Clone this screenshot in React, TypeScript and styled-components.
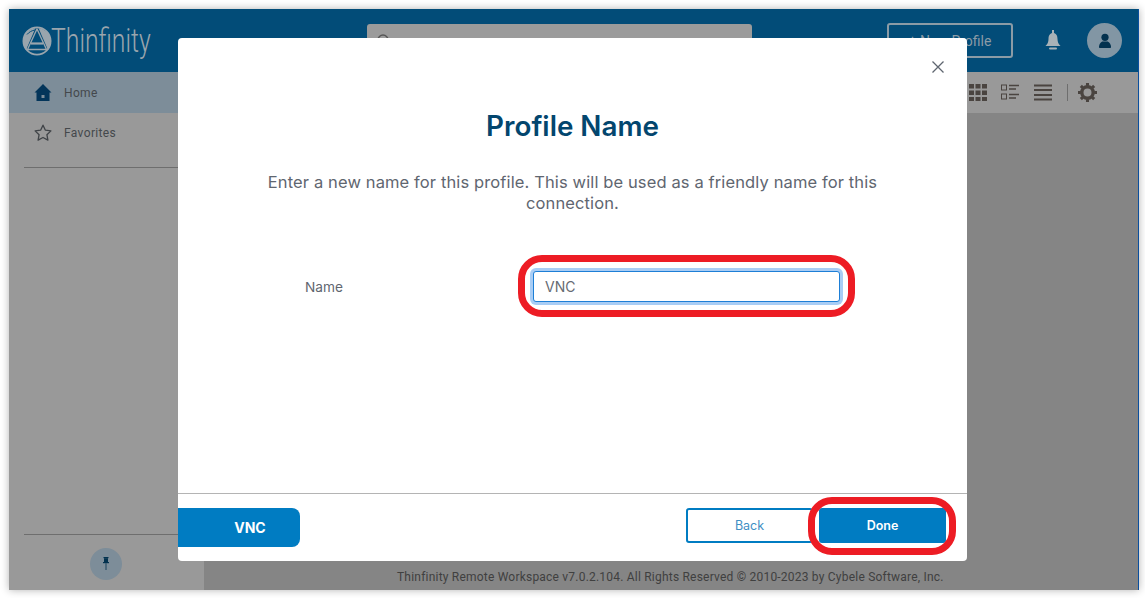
import React from "react";
import styled, { createGlobalStyle } from "styled-components";

const Global = createGlobalStyle`
  html, body { margin: 0; padding: 0; background: #fff; width: 1145px; height: 598px; overflow: hidden; }
  * { box-sizing: border-box; }
  body { font-family: Roboto, "Liberation Sans", sans-serif; }
`;

const Stage = styled.div`
  width: 1145px;
  height: 598px;
  padding: 9px 6px 8px 9px;
  background: #fff;
`;

const Window = styled.div`
  position: relative;
  width: 1130px;
  height: 581px;
  display: flex;
  flex-direction: column;
  overflow: hidden;
  background: #858585;
  border-right: 1px solid #0a4f9e;
  box-shadow: 0 0 8px rgba(0,0,0,.3);
`;

const Header = styled.header`
  height: 63px;
  flex: none;
  background: #024c78;
  display: flex;
  align-items: center;
  padding: 0 16px 0 13px;
`;

const Brand = styled.div`
  display: flex;
  align-items: center;
  width: 345px;
  color: #9aa5ad;
`;

const BrandName = styled.span`
  font-family: Roboto, sans-serif;
  font-size: 33px;
  line-height: 36px;
  font-weight: 300;
  display: inline-block;
  margin-left: -1px;
  transform: scaleX(.75);
  transform-origin: left center;
`;

const Search = styled.div`
  width: 385px;
  height: 33px;
  background: #9b9b9b;
  border-radius: 3px;
  display: flex;
  align-items: center;
  padding-left: 9px;
`;

const HeaderRight = styled.div`
  margin-left: auto;
  display: flex;
  align-items: center;
`;

const NewProfile = styled.div`
  width: 126px;
  height: 35px;
  border: 2px solid #8b9ba6;
  border-radius: 3px;
  color: #8b9ba6;
  font-size: 14px;
  display: flex;
  align-items: center;
  justify-content: center;
  margin-right: 32px;
`;

const Avatar = styled.div`
  width: 35px;
  height: 35px;
  margin-left: 26px;
  border-radius: 50%;
  background: #8296a4;
  display: flex;
  align-items: center;
  justify-content: center;
`;

const Body = styled.div`
  flex: 1;
  display: flex;
  min-height: 0;
`;

const Sidebar = styled.aside`
  width: 195px;
  flex: none;
  background: #999;
  display: flex;
  flex-direction: column;
`;

const NavItem = styled.div<{ $active?: boolean }>`
  height: 41px;
  display: flex;
  align-items: center;
  gap: 12px;
  padding-left: 25px;
  font-size: 12px;
  letter-spacing: .36px;
  color: #44484c;
  background: ${(p) => (p.$active ? "#7d8d99" : "transparent")};
  & + & { height: 39px; }
`;

const Divider = styled.div`
  height: 1px;
  margin: 15px 0 0 15px;
  background: #6e6e6e;
`;

const SideSpacer = styled.div`
  flex: 1;
`;

const SideFoot = styled.div`
  height: 56px;
  flex: none;
  margin-left: 15px;
  border-top: 1px solid #6e6e6e;
  display: flex;
  align-items: center;
  justify-content: center;
  padding-right: 17px;
  padding-top: 2px;
`;

const PinButton = styled.div`
  width: 32px;
  height: 32px;
  border-radius: 50%;
  background: #7d8d99;
  display: flex;
  align-items: center;
  justify-content: center;
`;

const Main = styled.main`
  flex: 1;
  display: flex;
  flex-direction: column;
`;

const ToolBar = styled.div`
  height: 41px;
  background: #999;
  display: flex;
  align-items: center;
  justify-content: flex-end;
  padding-right: 41px;
`;

const ToolIcon = styled.span<{ $gap: number }>`
  display: flex;
  margin-left: ${(p) => p.$gap}px;
`;

const ToolSep = styled.div`
  width: 1px;
  height: 17px;
  margin-left: 15px;
  background: #6e6e6e;
`;

const MainFill = styled.div`
  flex: 1;
`;

const Footer = styled.div`
  height: 27px;
  flex: none;
  display: flex;
  align-items: center;
  padding: 0 0 0 193px;
  font-size: 12px;
  letter-spacing: .21px;
  color: #404040;
`;

const Dialog = styled.div`
  position: absolute;
  left: 169px;
  top: 29px;
  width: 789px;
  height: 523px;
  background: #fff;
  border-radius: 4px;
  display: flex;
  flex-direction: column;
  overflow: hidden;
`;

const Close = styled.div`
  position: absolute;
  right: 23px;
  top: 23px;
  display: flex;
`;

const DialogBody = styled.div`
  flex: 1;
  display: flex;
  flex-direction: column;
  align-items: center;
  padding-top: 71px;
`;

const Title = styled.h1`
  margin: 0;
  font-family: Inter, sans-serif;
  font-size: 27.8px;
  line-height: 34px;
  font-weight: 600;
  color: #03466e;
`;

const Intro = styled.p`
  margin: 29px 0 0;
  width: 640px;
  text-align: center;
  font-family: Inter, sans-serif;
  font-size: 16.5px;
  line-height: 21px;
  letter-spacing: .12px;
  color: #5f6670;
`;

const FieldRow = styled.div`
  display: flex;
  align-items: center;
  align-self: stretch;
  margin-top: 57px;
  padding-left: 127px;
`;

const FieldLabel = styled.label`
  width: 228px;
  font-family: Inter, sans-serif;
  font-size: 13.7px;
  color: #5f6670;
`;

const NameWrap = styled.div`
  position: relative;
  display: flex;
`;

const NameInput = styled.input`
  width: 307px;
  height: 31px;
  border: 1px solid #1e7fd6;
  border-radius: 3px;
  box-shadow: 0 0 0 3px #a9cdf5;
  outline: none;
  padding: 0 11px;
  font-family: Inter, sans-serif;
  font-size: 14px;
  color: #666b73;
  background: #fff;
`;

const Callout = styled.div<{ $x: number; $y: number; $w: number; $h: number }>`
  position: absolute;
  left: ${(p) => p.$x}px;
  top: ${(p) => p.$y}px;
  width: ${(p) => p.$w}px;
  height: ${(p) => p.$h}px;
  border: 7px solid #ed1c24;
  border-radius: 24px;
  pointer-events: none;
`;

const DialogFoot = styled.div`
  height: 68px;
  flex: none;
  border-top: 1px solid #b4b4b4;
  display: flex;
  align-items: flex-start;
  padding: 14px 21px 0 0;
`;

const TypePill = styled.div`
  width: 122px;
  height: 39px;
  background: #007cc2;
  border-radius: 0 8px 8px 0;
  color: #fff;
  font-family: Inter, sans-serif;
  font-size: 14px;
  font-weight: 700;
  display: flex;
  align-items: center;
  justify-content: center;
  padding-left: 22px;
`;

const FootActions = styled.div`
  margin-left: auto;
  display: flex;
  position: relative;
`;

const ActionButton = styled.button<{ $primary?: boolean }>`
  width: 127px;
  height: 35px;
  border: 2px solid #007cc2;
  border-radius: 3px;
  background: ${(p) => (p.$primary ? "#007cc2" : "#fff")};
  color: ${(p) => (p.$primary ? "#fff" : "#3f8fc4")};
  font-family: Inter, sans-serif;
  font-size: 12.5px;
  font-weight: ${(p) => (p.$primary ? 600 : 400)};
  padding: 0;
  & + & { margin-left: 6px; }
`;

const Logo = () => (
  <svg width="30" height="30" viewBox="0 0 30 30" fill="none">
    <circle cx="15" cy="15" r="13.600" stroke="#9aa5ad" strokeWidth="1.800" />
    <path d="M13.500 2 4 24C1 20 .5 15 2 10.500 4 6 8 3 13.500 2Z" fill="#9aa5ad" />
    <path d="M16.500 2 26 24c3-4 3.500-9 2-13.500C26 6 22 3 16.500 2Z" fill="#9aa5ad" />
    <path d="M5 8.500c2-2.500 5-4 8-4.500" stroke="#024c78" strokeWidth="1" />
    <path d="M15 3 5.500 23.500h19Z" fill="#024c78" stroke="#9aa5ad" strokeWidth="1.400" strokeLinejoin="round" />
    <path d="M9 17.500h12" stroke="#9aa5ad" strokeWidth="2.200" />
  </svg>
);

const SearchIcon = () => (
  <svg width="16" height="16" viewBox="0 0 16 16" fill="none" stroke="#555" strokeWidth="1.400">
    <circle cx="7" cy="7" r="5" />
    <path d="m11 11 4 4" />
  </svg>
);

const Bell = () => (
  <svg width="16" height="22" viewBox="0 0 16 22" fill="#a8b1b7">
    <rect x="7" y="0" width="2" height="4" />
    <path d="M8 3c3 0 4.500 2.500 4.500 6 0 3 1 5 3 7H.5c2-2 3-4 3-7 0-3.500 1.500-6 4.500-6Z" />
    <rect x="4" y="17.500" width="8" height="2" rx="1" />
  </svg>
);

const UserIcon = () => (
  <svg width="16" height="16" viewBox="0 0 16 16" fill="#03324f">
    <circle cx="8" cy="4.300" r="3.600" />
    <path d="M3 15c-.6 0-1-.4-1-1 0-3 2-5.500 4-5.500h4c2 0 4 2.500 4 5.500 0 .6-.4 1-1 1Z" />
  </svg>
);

const Home = () => (
  <svg width="18" height="17" viewBox="-.5 0 18 17" fill="#03355a">
    <path d="M8.500 0 17 8.500h-2V17H2V8.500H0Z" />
    <rect x="7" y="11" width="3" height="3" fill="#7d8d99" />
  </svg>
);

const Star = () => (
  <svg width="18" height="17" viewBox="0 0 18 17" fill="none" stroke="#3f4347" strokeWidth="1.300" strokeLinejoin="round">
    <path d="m9 1.200 2.400 5 5.500.7-4 3.800 1 5.400L9 13.500l-4.900 2.600 1-5.400-4-3.800 5.500-.7Z" />
  </svg>
);

const Pin = () => (
  <svg width="8" height="13" viewBox="0 0 8 13" fill="#03324f">
    <rect x="1.500" y="0" width="5" height="1.200" />
    <rect x="2" y="1.200" width="4" height="3.800" />
    <rect x="1" y="5" width="6" height="1.200" />
    <rect x="3.600" y="6.200" width=".8" height="6.800" />
  </svg>
);

const Grid = () => (
  <svg width="18" height="17" viewBox="0 0 18 17" fill="#4a4440">
    {[0, 6.5, 13].map((y) =>
      [0, 6.5, 13].map((x) => <rect key={`${x}-${y}`} x={x} y={y} width="5" height="4.500" />)
    )}
  </svg>
);

const ListDetail = () => (
  <svg width="18" height="17" viewBox="0 0 18 17" fill="none" stroke="#4a4440">
    <rect x=".5" y="1" width="5" height="5" />
    <rect x=".5" y="10" width="5" height="5" />
    <path d="M8 1.500h10M8 5h7M8 10.500h10M8 14h7" strokeWidth="1.500" />
  </svg>
);

const Lines = () => (
  <svg width="18" height="17" viewBox="0 0 18 17" fill="#4a4440">
    <rect width="18" height="2" y="0.500" />
    <rect width="18" height="2" y="5" />
    <rect width="18" height="2" y="10" />
    <rect width="18" height="2" y="14.500" />
  </svg>
);

const Gear = () => (
  <svg width="19" height="19" viewBox="0 0 20 20" fill="none" stroke="#4a4440">
    <circle cx="10" cy="10" r="6" strokeWidth="3.600" />
    <path d="M10 0v3M10 17v3M0 10h3M17 10h3M3 3l2 2M15 15l2 2M17 3l-2 2M5 15l-2 2" strokeWidth="3.200" />
  </svg>
);

const CloseIcon = () => (
  <svg width="12" height="12" viewBox="0 0 12 12" stroke="#5f6670" strokeWidth="1.300">
    <path d="m.5.500 11 11M11.500.500l-11 11" />
  </svg>
);

export default function App() {
  return (
    <Stage>
      <Global />
      <Window>
        <Header>
          <Brand>
            <Logo />
            <BrandName>Thinfinity</BrandName>
          </Brand>
          <Search>
            <SearchIcon />
          </Search>
          <HeaderRight>
            <NewProfile>+ New Profile</NewProfile>
            <Bell />
            <Avatar>
              <UserIcon />
            </Avatar>
          </HeaderRight>
        </Header>
        <Body>
          <Sidebar>
            <NavItem $active>
              <Home />
              Home
            </NavItem>
            <NavItem>
              <Star />
              Favorites
            </NavItem>
            <Divider />
            <SideSpacer />
            <SideFoot>
              <PinButton>
                <Pin />
              </PinButton>
            </SideFoot>
          </Sidebar>
          <Main>
            <ToolBar>
              <ToolIcon $gap={0}><Grid /></ToolIcon>
              <ToolIcon $gap={14}><ListDetail /></ToolIcon>
              <ToolIcon $gap={15}><Lines /></ToolIcon>
              <ToolSep />
              <ToolIcon $gap={10}><Gear /></ToolIcon>
            </ToolBar>
            <MainFill />
            <Footer>Thinfinity Remote Workspace v7.0.2.104. All Rights Reserved © 2010-2023 by Cybele Software, Inc.</Footer>
          </Main>
        </Body>
        <Dialog>
          <Close>
            <CloseIcon />
          </Close>
          <DialogBody>
            <Title>Profile Name</Title>
            <Intro>Enter a new name for this profile. This will be used as a friendly name for this connection.</Intro>
            <FieldRow>
              <FieldLabel>Name</FieldLabel>
              <NameWrap>
                <NameInput defaultValue="VNC" readOnly />
                <Callout $x={-15} $y={-16} $w={337} $h={62} />
              </NameWrap>
            </FieldRow>
          </DialogBody>
          <DialogFoot>
            <TypePill>VNC</TypePill>
            <FootActions>
              <ActionButton>Back</ActionButton>
              <ActionButton $primary>Done</ActionButton>
              <Callout $x={122} $y={-11} $w={148} $h={58} />
            </FootActions>
          </DialogFoot>
        </Dialog>
      </Window>
    </Stage>
  );
}
